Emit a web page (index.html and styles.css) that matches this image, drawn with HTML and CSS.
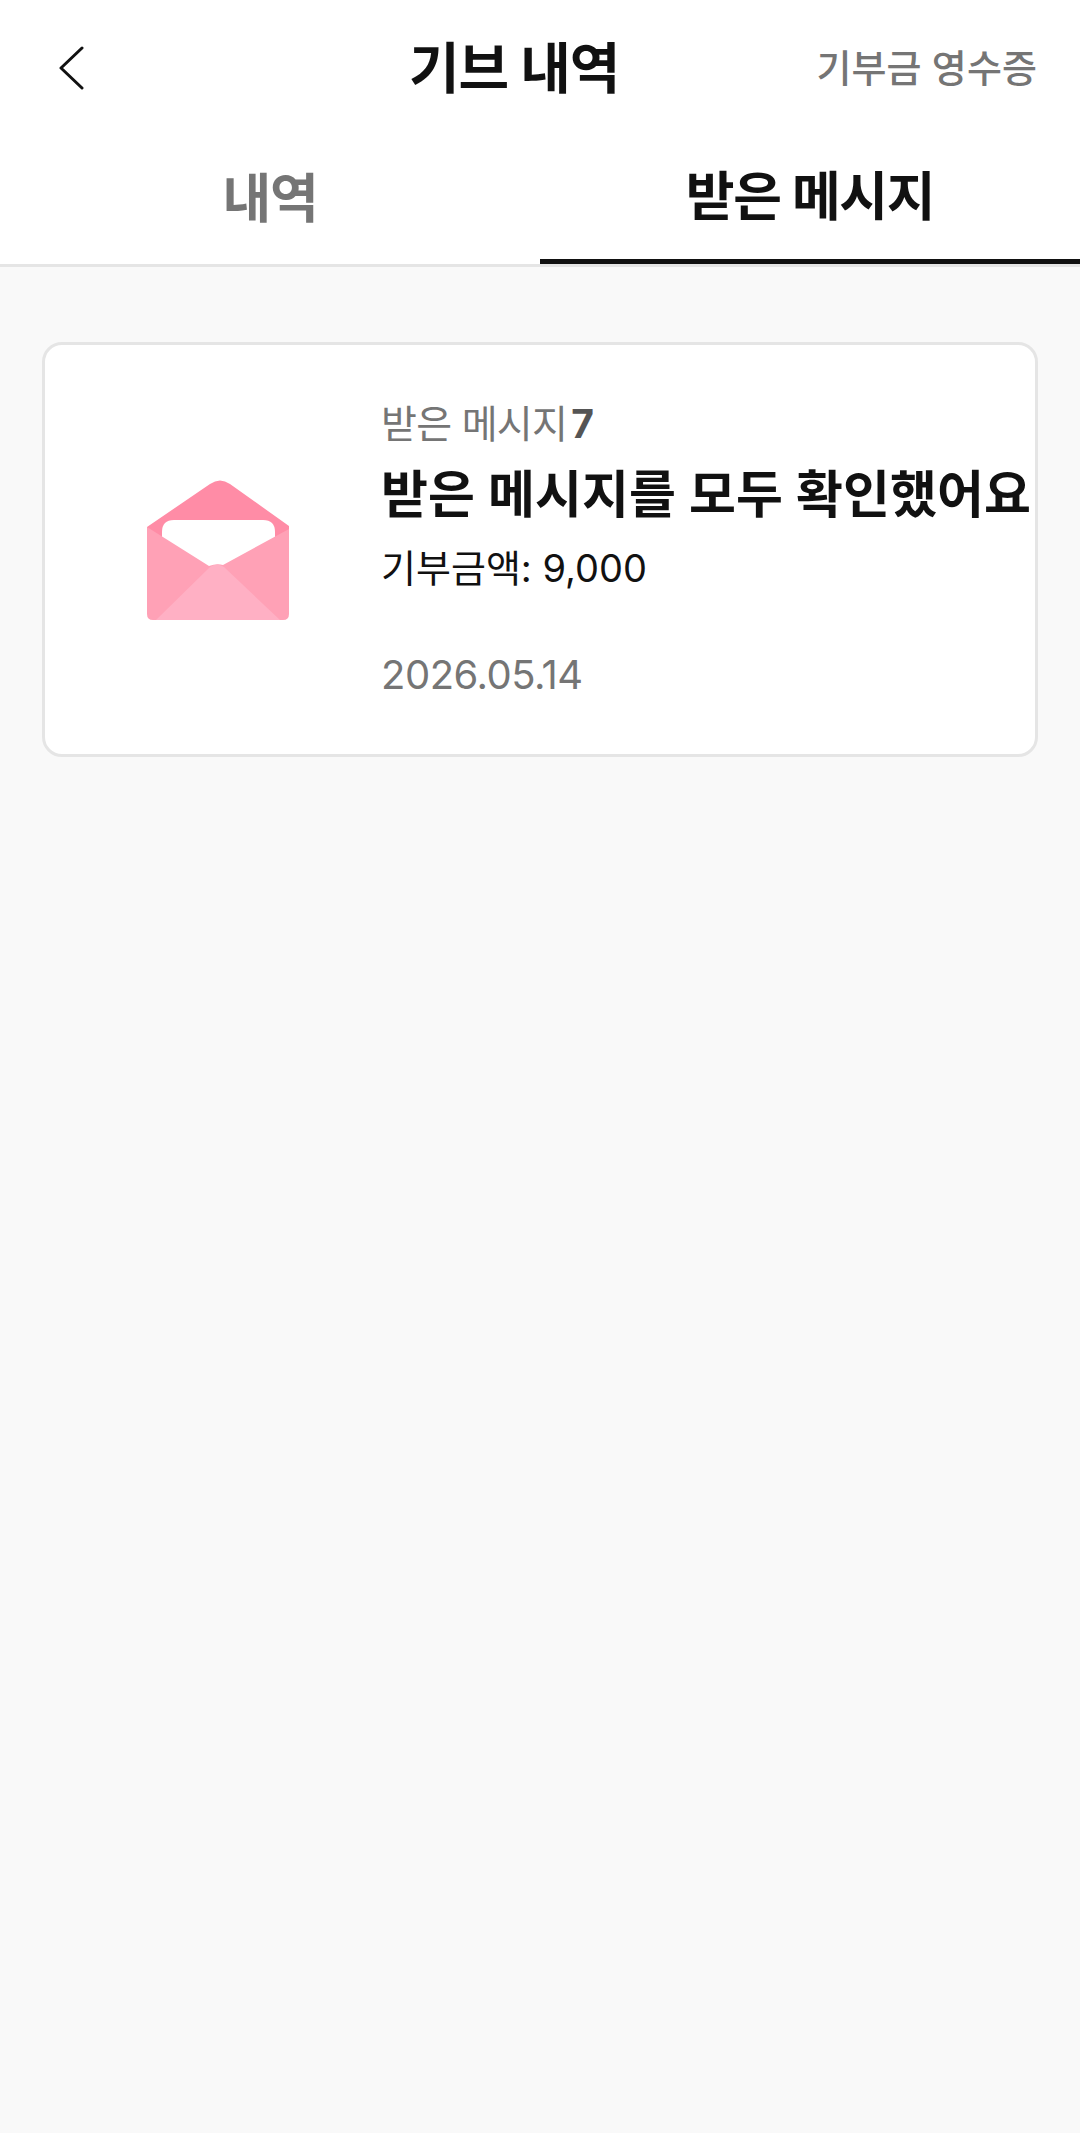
FILE: index.html
```html
<!DOCTYPE html>
<html lang="ko">
<head>
  <meta charset="UTF-8" />
  <meta name="viewport" content="width=device-width, initial-scale=1.0"/>
  <title>기브 내역</title>
  <link rel="stylesheet" href="styles.css">
</head>
<body>
  <header class="topbar">
    <button class="back" aria-label="뒤로">
      <svg width="26" height="46" viewBox="0 0 26 46">
        <path d="M24 3 L3 23 L24 43" fill="none" stroke="#111" stroke-width="3" stroke-linecap="round" stroke-linejoin="round"/>
      </svg>
    </button>
    <h1 class="title">기브 내역</h1>
    <a class="receipt">기부금 영수증</a>
  </header>

  <nav class="tabs">
    <div class="tab">내역</div>
    <div class="tab active">받은 메시지</div>
  </nav>

  <main class="content">
    <div class="card">
      <div class="thumb">
        <svg width="143" height="142" viewBox="27 20 143 142">
          <path d="M27 68 L90 25 Q100 18 110 25 L169 67 V100 H27 Z" fill="#ff8ca6"/>
          <path d="M42 73 Q42 61 54 61 H143 Q155 61 155 73 V112 H42 Z" fill="#fff"/>
          <path d="M27 68 L89 107 Q97 104 103 106 L169 70 V155 Q169 161 163 161 H33 Q27 161 27 155 Z" fill="#ffa1b6"/>
          <path d="M36 161 L90 108 Q97 103 104 108 L160 161 Z" fill="#ffb0c4"/>
        </svg>
      </div>
      <div class="info">
        <p class="count">받은 메시지<b>7</b></p>
        <p class="headline">받은 메시지를 모두 확인했어요</p>
        <p class="amount">기부금액: 9,000</p>
        <p class="date">2026.05.14</p>
      </div>
    </div>
  </main>
</body>
</html>
```

FILE: styles.css
```css
* {
  box-sizing: border-box;
}
html, body {
  height: 100%;
}
body {
  margin: 0;
  display: flex;
  flex-direction: column;
  background: #f9f9f9;
  color: #111;
  font-family: Inter, "Noto Sans CJK KR", sans-serif;
}
p {
  margin: 0;
}
.topbar {
  height: 132px;
  background: #fff;
  display: grid;
  grid-template-columns: 351px auto 1fr;
  align-items: center;
  padding: 0 43px 0 58px;
}
.back {
  border: none;
  background: none;
  padding: 0;
  width: 26px;
  height: 46px;
  margin-top: 4px;
}
.title {
  margin: 4px 0 0;
  font-size: 55px;
  line-height: 64px;
  font-weight: 700;
  letter-spacing: -1px;
}
.receipt {
  justify-self: end;
  margin-bottom: 2px;
  font-size: 38px;
  font-weight: 500;
  color: #757575;
  letter-spacing: 0.1px;
}
.tabs {
  height: 135px;
  background: #fff;
  display: flex;
  border-bottom: 3px solid #e5e5e5;
}
.tab {
  flex: 1;
  display: flex;
  align-items: center;
  justify-content: center;
  padding-bottom: 6px;
  font-size: 53px;
  font-weight: 700;
  color: #757575;
  letter-spacing: -1.3px;
}
.tab.active {
  color: #111;
  border-bottom: 5px solid #111;
}
.content {
  flex: 1;
  padding: 75px 42px 0;
}
.card {
  height: 415px;
  background: #fff;
  border: 3px solid #e5e5e5;
  border-radius: 20px;
  display: flex;
  align-items: center;
}
.thumb {
  width: 335px;
  display: flex;
  padding-left: 102px;
}
.info {
  flex: 1;
  align-self: flex-start;
  padding: 54px 0 0 1px;
  white-space: nowrap;
}
.count {
  font-size: 39px;
  line-height: 50px;
  color: #757575;
  letter-spacing: -0.7px;
}
.count b {
  color: #555;
  margin-left: 4px;
}
.headline {
  margin-top: 13px;
  font-size: 51px;
  line-height: 66px;
  font-weight: 600;
  letter-spacing: 0.1px;
}
.amount {
  margin-top: 15px;
  font-size: 38px;
  line-height: 50px;
}
.date {
  margin-top: 57px;
  font-size: 40px;
  line-height: 50px;
  color: #757575;
  letter-spacing: -0.5px;
}
```
